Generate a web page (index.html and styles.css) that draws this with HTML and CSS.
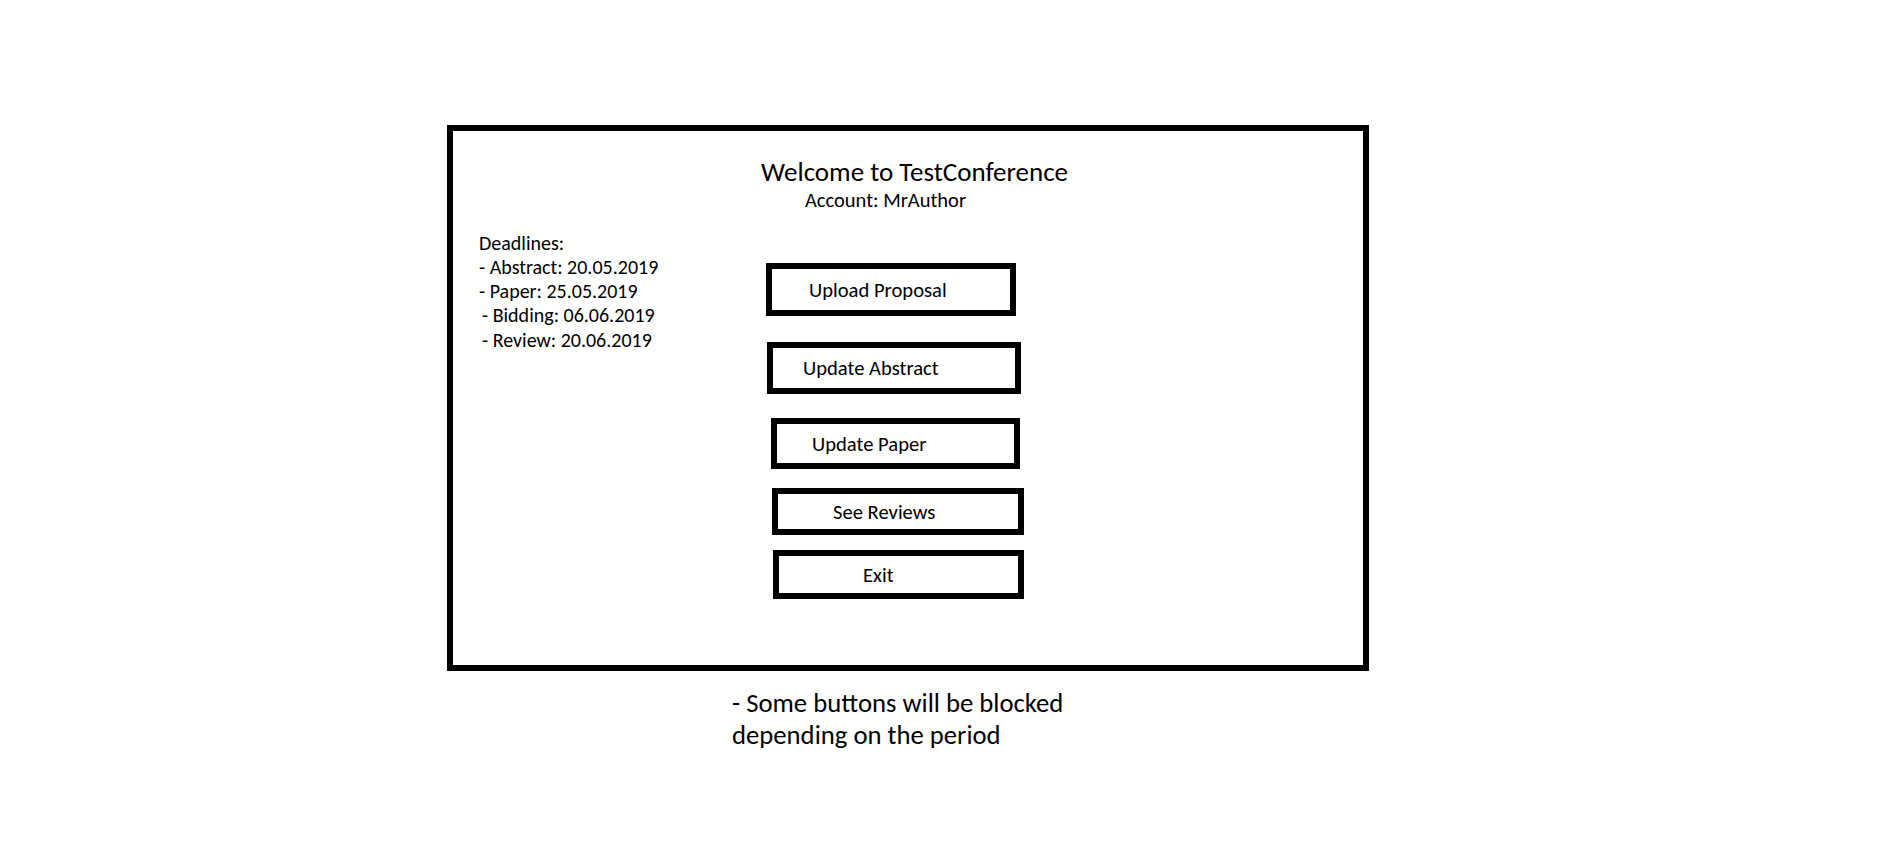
FILE: index.html
```html
<!DOCTYPE html>
<html lang="en">
<head>
<meta charset="utf-8">
<title>TestConference</title>
<link rel="stylesheet" href="styles.css">
</head>
<body>
<div class="frame">
  <div class="header">
    <div class="title">Welcome to TestConference</div>
    <div class="account">Account: MrAuthor</div>
  </div>
  <div class="content">
    <div class="deadlines">
      <div>Deadlines:</div>
      <div>- Abstract: 20.05.2019</div>
      <div>- Paper: 25.05.2019</div>
      <div class="indent">- Bidding: 06.06.2019</div>
      <div class="indent last">- Review: 20.06.2019</div>
    </div>
    <div class="actions">
      <div class="btn btn-upload">Upload Proposal</div>
      <div class="btn btn-abstract">Update Abstract</div>
      <div class="btn btn-paper">Update Paper</div>
      <div class="btn btn-reviews">See Reviews</div>
      <div class="btn btn-exit">Exit</div>
    </div>
  </div>
</div>
<div class="note">
  <div>- Some buttons will be blocked</div>
  <div>depending on the period</div>
</div>
</body>
</html>
```
FILE: styles.css
```css
html, body {
  margin: 0;
  padding: 0;
  background: #fff;
}
body {
  font-family: Carlito, Calibri, Lato, "Open Sans", sans-serif;
  color: #000;
}
.frame {
  box-sizing: border-box;
  margin: 125px 0 0 447px;
  width: 922px;
  height: 546px;
  border: 6px solid #000;
}
.header {
  padding-top: 25px;
}
.title {
  margin-left: 308px;
  font-size: 27px;
  line-height: 31px;
}
.account {
  margin-left: 352px;
  margin-top: 2px;
  font-size: 20.5px;
  line-height: 23px;
}
.content {
  display: flex;
  margin-top: 19px;
}
.deadlines {
  margin-left: 26px;
  width: 287px;
  font-size: 20px;
  line-height: 24px;
}
.deadlines .indent {
  padding-left: 3px;
}
.deadlines .last {
  margin-top: 1px;
}
.actions {
  display: flex;
  flex-direction: column;
  padding-top: 32px;
}
.btn {
  box-sizing: border-box;
  display: flex;
  align-items: center;
  border: 6px solid #000;
  font-size: 20.6px;
}
.btn-upload {
  width: 250px;
  height: 53px;
  padding-left: 37px;
}
.btn-abstract {
  margin-top: 26px;
  margin-left: 1px;
  width: 254px;
  height: 52px;
  padding-left: 30px;
}
.btn-paper {
  margin-top: 24px;
  margin-left: 5px;
  width: 249px;
  height: 51px;
  padding-left: 35px;
}
.btn-reviews {
  margin-top: 19px;
  margin-left: 6px;
  width: 252px;
  height: 47px;
  padding-left: 55px;
}
.btn-exit {
  margin-top: 15px;
  margin-left: 7px;
  width: 251px;
  height: 49px;
  padding-left: 84px;
}
.note {
  margin: 16px 0 0 732px;
  font-size: 26.7px;
  line-height: 32px;
}
```
